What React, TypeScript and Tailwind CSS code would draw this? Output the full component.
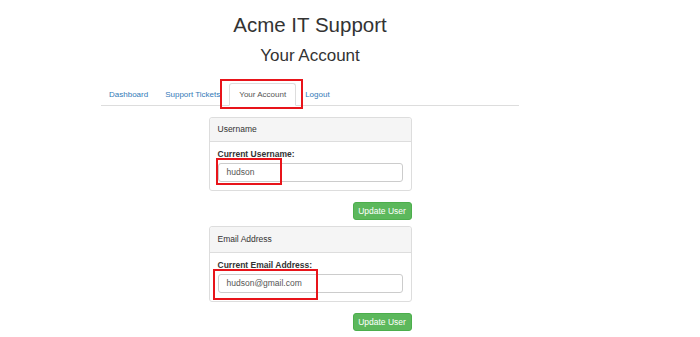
const tabs = [
  { name: 'Dashboard', active: false },
  { name: 'Support Tickets', active: false },
  { name: 'Your Account', active: true },
  { name: 'Logout', active: false },
];

const sections = [
  {
    title: 'Username',
    label: 'Current Username:',
    value: 'hudson',
    head: 'py-[6px]',
    mark: 'absolute -left-[2px] -top-[5px] -bottom-[3px] w-[66px] border-2 border-[#e8141a]',
  },
  {
    title: 'Email Address',
    label: 'Current Email Address:',
    value: 'hudson@gmail.com',
    head: 'py-[7px]',
    mark: 'absolute -left-[5px] -top-[5px] -bottom-[7px] w-[105px] border-2 border-[#e8141a]',
  },
];

export default function App() {
  return (
    <div className="min-h-[337px] w-[700px] overflow-hidden bg-white font-['Liberation_Sans',Arial,sans-serif] text-[#333]">
      <div className="w-[620px]">
        <h1 className="pt-[13px] text-center text-[20.5px] leading-[24px]">Acme IT Support</h1>
        <h2 className="mt-[9px] text-center text-[17px] leading-[20px]">Your Account</h2>

        <nav className="mx-auto mt-[13px] flex h-[27px] w-[418px] items-end border-b border-[#ddd]">
          {tabs.map((tab) =>
            tab.active ? (
              <div key={tab.name} className="relative -mb-px mr-px">
                <span className="block rounded-t-[3px] border border-[#ddd] border-b-white bg-white px-[9px] pb-[5px] pt-[5px] text-[8px] leading-[11px] text-[#555]">
                  {tab.name}
                </span>
                <span className="absolute -left-[9px] -right-[7px] -top-[4px] -bottom-[3px] border-2 border-[#e8141a]" />
              </div>
            ) : (
              <a
                key={tab.name}
                href="#"
                className="mr-px block px-[8px] pb-[5px] pt-[6px] text-[8px] leading-[11px] text-[#337ab7]"
              >
                {tab.name}
              </a>
            )
          )}
        </nav>

        <div className="mx-auto mt-[11px] w-[203px]">
          {sections.map((s) => (
            <div key={s.title} className="mb-[6px]">
              <div className="rounded-[3px] border border-[#ddd] bg-white">
                <div className={`rounded-t-[3px] border-b border-[#ddd] bg-[#f5f5f5] px-[8px] text-[8.5px] leading-[11px] ${s.head}`}>
                  {s.title}
                </div>
                <div className="px-[8px] pb-[8px] pt-[6px]">
                  <label className="mb-[2px] block text-[8.5px] font-bold leading-[13px]">{s.label}</label>
                  <div className="relative">
                    <div className="h-[19px] rounded-[3px] border border-[#ccc] px-[8px] text-[8.5px] leading-[17px] text-[#555]">
                      {s.value}
                    </div>
                    <span className={s.mark} />
                  </div>
                </div>
              </div>
              <div className="mt-[11px] flex justify-end">
                <button className="h-[18px] w-[59px] rounded-[3px] border border-[#4cae4c] bg-[#5cb85c] text-[8.5px] leading-[16px] text-white">
                  Update User
                </button>
              </div>
            </div>
          ))}
          <div className="h-[4px] rounded-t-[3px] border border-b-0 border-[#ddd] bg-[#f5f5f5]" />
        </div>
      </div>
    </div>
  );
}
